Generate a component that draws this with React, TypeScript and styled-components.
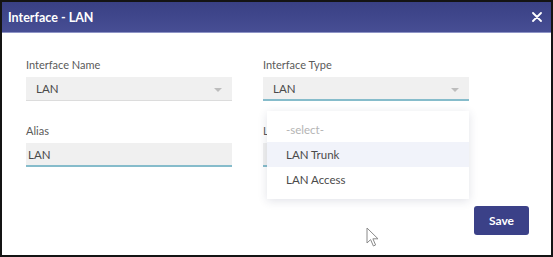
import styled, { createGlobalStyle } from 'styled-components';

const GlobalStyle = createGlobalStyle`
	html, body {
		margin: 0;
		padding: 0;
		background: #ffffff;
	}
	body {
		font-family: Lato, 'Open Sans', sans-serif;
	}
`;

const typeOptions = ['LAN Trunk', 'LAN Access'];

export default function App() {
	return (
		<>
			<GlobalStyle />
			<Frame>
				<Header>
					<Title>Interface - LAN</Title>
					<CloseButton aria-label='close'>
						<svg width='10' height='10' viewBox='0 0 10 10'>
							<path d='M1 1 L9 9 M9 1 L1 9' stroke='#ffffff' strokeWidth='1.8' strokeLinecap='round' />
						</svg>
					</CloseButton>
				</Header>
				<Body>
					<FormGrid>
						<Field>
							<Label>Interface Name</Label>
							<SelectBox $focused={false}>
								<Value>LAN</Value>
								<Caret />
							</SelectBox>
						</Field>
						<Field>
							<Label>Interface Type</Label>
							<SelectBox $focused>
								<Value>LAN</Value>
								<Caret />
							</SelectBox>
							<Menu>
								<MenuItem $placeholder>-select-</MenuItem>
								{typeOptions.map((opt, i) => (
									<MenuItem key={opt} $active={i === 0}>
										{opt}
									</MenuItem>
								))}
							</Menu>
						</Field>
						<Field>
							<Label>Alias</Label>
							<TextInput defaultValue='LAN' />
						</Field>
						<Field>
							<Label>Link</Label>
							<TextInput defaultValue='' />
						</Field>
					</FormGrid>
					<Footer>
						<SaveButton>Save</SaveButton>
					</Footer>
				</Body>
				<Pointer width='14' height='21' viewBox='0 0 14 21'>
					<path
						d='M1 1 L1 16 L4.6 12.6 L7.4 19 L9.6 18 L6.9 11.8 L12 11.8 Z'
						fill='#ffffff'
						stroke='#8a8a8a'
						strokeWidth='1'
						strokeLinejoin='round'
					/>
				</Pointer>
			</Frame>
		</>
	);
}

const Frame = styled.div`
	position: relative;
	box-sizing: border-box;
	width: 553px;
	height: 257px;
	border: 2px solid #141414;
	background: #ffffff;
	overflow: hidden;
`;

const Header = styled.div`
	display: flex;
	align-items: center;
	justify-content: space-between;
	height: 30px;
	padding: 0 8px 0 6px;
	background: linear-gradient(#394084, #474e94);
	border-bottom: 1px solid #8e94c6;
`;

const Title = styled.h1`
	margin: 0;
	font-size: 12.5px;
	font-weight: 700;
	color: #ffffff;
`;

const CloseButton = styled.button`
	display: flex;
	align-items: center;
	justify-content: center;
	width: 12px;
	height: 12px;
	padding: 0;
	border: none;
	background: transparent;
`;

const Body = styled.div`
	padding: 25px 22px 0 24px;
`;

const FormGrid = styled.div`
	display: grid;
	grid-template-columns: 206px 206px;
	column-gap: 31px;
	row-gap: 23px;
`;

const Field = styled.div`
	position: relative;
	display: flex;
	flex-direction: column;
`;

const Label = styled.label`
	height: 14px;
	line-height: 14px;
	margin-bottom: 5px;
	font-size: 11px;
	color: #5a5a5a;
`;

const SelectBox = styled.div<{ $focused: boolean }>`
	display: flex;
	align-items: center;
	justify-content: space-between;
	box-sizing: border-box;
	height: 24px;
	padding: 0 10px;
	background: #f0f0f0;
	border-bottom: ${({ $focused }) => ($focused ? '2px solid #86bccb' : '1px solid #dcdcdc')};
`;

const Value = styled.span`
	font-size: 11.5px;
	color: #4a4a4a;
`;

const Caret = styled.span`
	width: 0;
	height: 0;
	margin-top: 3px;
	border-left: 4px solid transparent;
	border-right: 4px solid transparent;
	border-top: 4px solid #bdbdbd;
`;

const TextInput = styled.input`
	box-sizing: border-box;
	height: 24px;
	padding: 0 2px;
	border: none;
	border-bottom: 2px solid #86bccb;
	background: #f0f0f0;
	font-family: inherit;
	font-size: 11.5px;
	color: #4a4a4a;
	outline: none;
`;

const Menu = styled.ul`
	position: absolute;
	top: 53px;
	left: 4px;
	z-index: 2;
	box-sizing: border-box;
	width: 202px;
	margin: 0;
	padding: 6px 0 7px;
	list-style: none;
	background: #ffffff;
	box-shadow: 0 2px 9px rgba(40, 50, 90, 0.14);
`;

const MenuItem = styled.li<{ $placeholder?: boolean; $active?: boolean }>`
	height: 25px;
	line-height: 25px;
	padding-left: 19px;
	font-size: 11.5px;
	color: ${({ $placeholder }) => ($placeholder ? '#b4b4b4' : '#4a4a4a')};
	background: ${({ $active }) => ($active ? '#f1f3fa' : 'transparent')};
`;

const Footer = styled.div`
	display: flex;
	justify-content: flex-end;
	margin-top: 39px;
`;

const SaveButton = styled.button`
	width: 55px;
	height: 29px;
	border: none;
	border-radius: 3px;
	background: #3b4188;
	color: #ffffff;
	font-family: inherit;
	font-size: 12px;
	font-weight: 700;
`;

const Pointer = styled.svg`
	position: absolute;
	left: 364px;
	top: 225px;
`;
